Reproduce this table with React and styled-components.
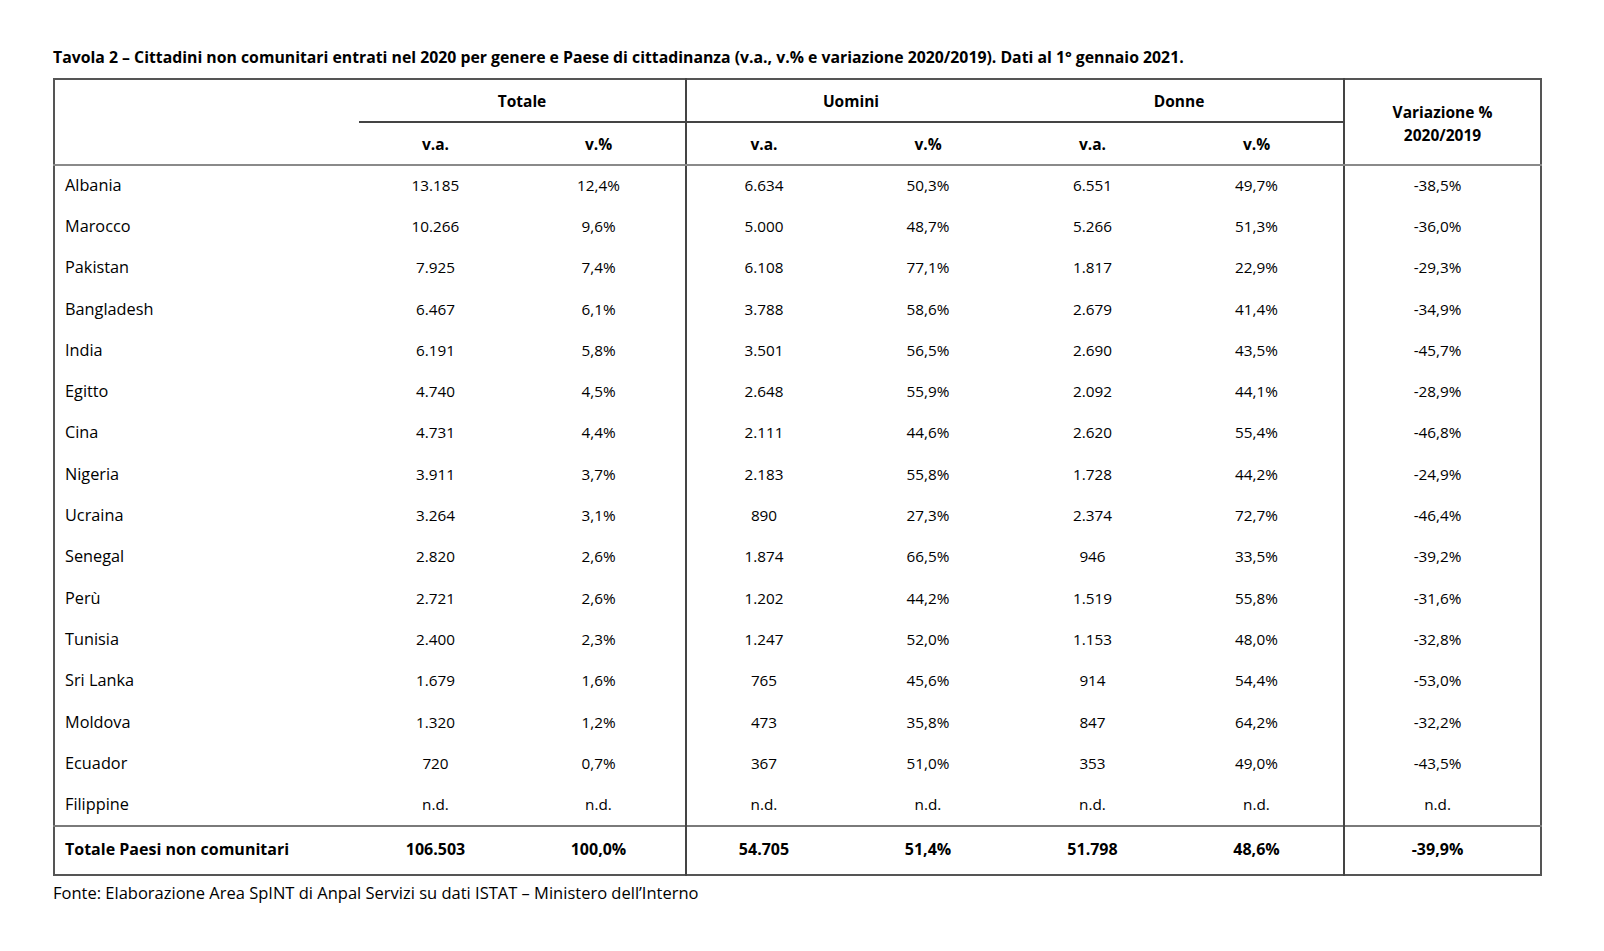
import styled, { createGlobalStyle } from 'styled-components';

const GlobalStyle = createGlobalStyle`
  html, body {
    margin: 0;
    padding: 0;
    background: #fff;
  }
  body {
    font-family: 'Open Sans', 'Liberation Sans', sans-serif;
    color: #000;
  }
`;

const rows = [
  ['Albania', '13.185', '12,4%', '6.634', '50,3%', '6.551', '49,7%', '-38,5%'],
  ['Marocco', '10.266', '9,6%', '5.000', '48,7%', '5.266', '51,3%', '-36,0%'],
  ['Pakistan', '7.925', '7,4%', '6.108', '77,1%', '1.817', '22,9%', '-29,3%'],
  ['Bangladesh', '6.467', '6,1%', '3.788', '58,6%', '2.679', '41,4%', '-34,9%'],
  ['India', '6.191', '5,8%', '3.501', '56,5%', '2.690', '43,5%', '-45,7%'],
  ['Egitto', '4.740', '4,5%', '2.648', '55,9%', '2.092', '44,1%', '-28,9%'],
  ['Cina', '4.731', '4,4%', '2.111', '44,6%', '2.620', '55,4%', '-46,8%'],
  ['Nigeria', '3.911', '3,7%', '2.183', '55,8%', '1.728', '44,2%', '-24,9%'],
  ['Ucraina', '3.264', '3,1%', '890', '27,3%', '2.374', '72,7%', '-46,4%'],
  ['Senegal', '2.820', '2,6%', '1.874', '66,5%', '946', '33,5%', '-39,2%'],
  ['Perù', '2.721', '2,6%', '1.202', '44,2%', '1.519', '55,8%', '-31,6%'],
  ['Tunisia', '2.400', '2,3%', '1.247', '52,0%', '1.153', '48,0%', '-32,8%'],
  ['Sri Lanka', '1.679', '1,6%', '765', '45,6%', '914', '54,4%', '-53,0%'],
  ['Moldova', '1.320', '1,2%', '473', '35,8%', '847', '64,2%', '-32,2%'],
  ['Ecuador', '720', '0,7%', '367', '51,0%', '353', '49,0%', '-43,5%'],
  ['Filippine', 'n.d.', 'n.d.', 'n.d.', 'n.d.', 'n.d.', 'n.d.', 'n.d.'],
];

const total = ['Totale Paesi non comunitari', '106.503', '100,0%', '54.705', '51,4%', '51.798', '48,6%', '-39,9%'];

// column indexes that carry a divider on their left side
const dividers = [3, 7];

const Page = styled.div`
  padding: 47px 0 40px 53px;
`;

const Title = styled.p`
  margin: 0 0 11px;
  font-weight: 700;
  font-size: 15.8px;
  line-height: 20px;
`;

const Table = styled.table`
  border-collapse: collapse;
  table-layout: fixed;
  width: 1487px;
  border: 2px solid #555;
`;

const HeadCell = styled.th`
  font-weight: 700;
  font-size: 15.5px;
  text-align: center;
  padding: ${(p) => (p.$sub ? '0 10px 0 0' : '0')};
  height: 41px;
  border-left: ${(p) => (p.$divider ? '2px solid #444' : 'none')};
  border-bottom: ${(p) => (p.$under ? '2px solid #444' : p.$soft ? '2px solid #8a8a8a' : 'none')};
`;

const Variation = styled(HeadCell)`
  line-height: 23px;
  padding-top: 4px;
`;

const Row = styled.tr`
  height: ${(p) => (p.$total ? '49px' : '41.3px')};
  border-top: ${(p) => (p.$total ? '2px solid #7a7a7a' : 'none')};
`;

const Cell = styled.td`
  padding: ${(p) => (p.$label ? '0 0 2px 10px' : '0 10px 2px 0')};
  text-align: ${(p) => (p.$label ? 'left' : 'center')};
  font-weight: ${(p) => (p.$bold ? 700 : 400)};
  font-size: ${(p) => (p.$bold ? '16px' : p.$label ? '16.3px' : '15.3px')};
  white-space: nowrap;
  border-left: ${(p) => (p.$divider ? '2px solid #444' : 'none')};
`;

const Source = styled.p`
  margin: 7px 0 0;
  font-size: 16.5px;
  line-height: 20px;
`;

const DataRow = ({ values, isTotal }) => (
  <Row $total={isTotal}>
    {values.map((v, i) => (
      <Cell key={i} $label={i === 0} $bold={isTotal} $divider={dividers.includes(i)}>
        {v}
      </Cell>
    ))}
  </Row>
);

export default function App() {
  return (
    <>
      <GlobalStyle />
      <Page>
        <Title>
          Tavola 2 – Cittadini non comunitari entrati nel 2020 per genere e Paese di cittadinanza (v.a., v.% e
          variazione 2020/2019). Dati al 1° gennaio 2021.
        </Title>
        <Table>
          <colgroup>
            <col style={{ width: 305 }} />
            <col style={{ width: 163 }} />
            <col style={{ width: 164 }} />
            <col style={{ width: 165 }} />
            <col style={{ width: 164 }} />
            <col style={{ width: 165 }} />
            <col style={{ width: 164 }} />
            <col style={{ width: 197 }} />
          </colgroup>
          <thead>
            <tr>
              <HeadCell rowSpan={2} $soft />
              <HeadCell colSpan={2} $under>Totale</HeadCell>
              <HeadCell colSpan={2} $under $divider>Uomini</HeadCell>
              <HeadCell colSpan={2} $under>Donne</HeadCell>
              <Variation rowSpan={2} $divider $soft>
                Variazione %
                <br />
                2020/2019
              </Variation>
            </tr>
            <tr>
              <HeadCell $sub $soft>v.a.</HeadCell>
              <HeadCell $sub $soft>v.%</HeadCell>
              <HeadCell $sub $soft $divider>v.a.</HeadCell>
              <HeadCell $sub $soft>v.%</HeadCell>
              <HeadCell $sub $soft>v.a.</HeadCell>
              <HeadCell $sub $soft>v.%</HeadCell>
            </tr>
          </thead>
          <tbody>
            {rows.map((r) => (
              <DataRow key={r[0]} values={r} />
            ))}
            <DataRow values={total} isTotal />
          </tbody>
        </Table>
        <Source>Fonte: Elaborazione Area SpINT di Anpal Servizi su dati ISTAT – Ministero dell’Interno</Source>
      </Page>
    </>
  );
}
